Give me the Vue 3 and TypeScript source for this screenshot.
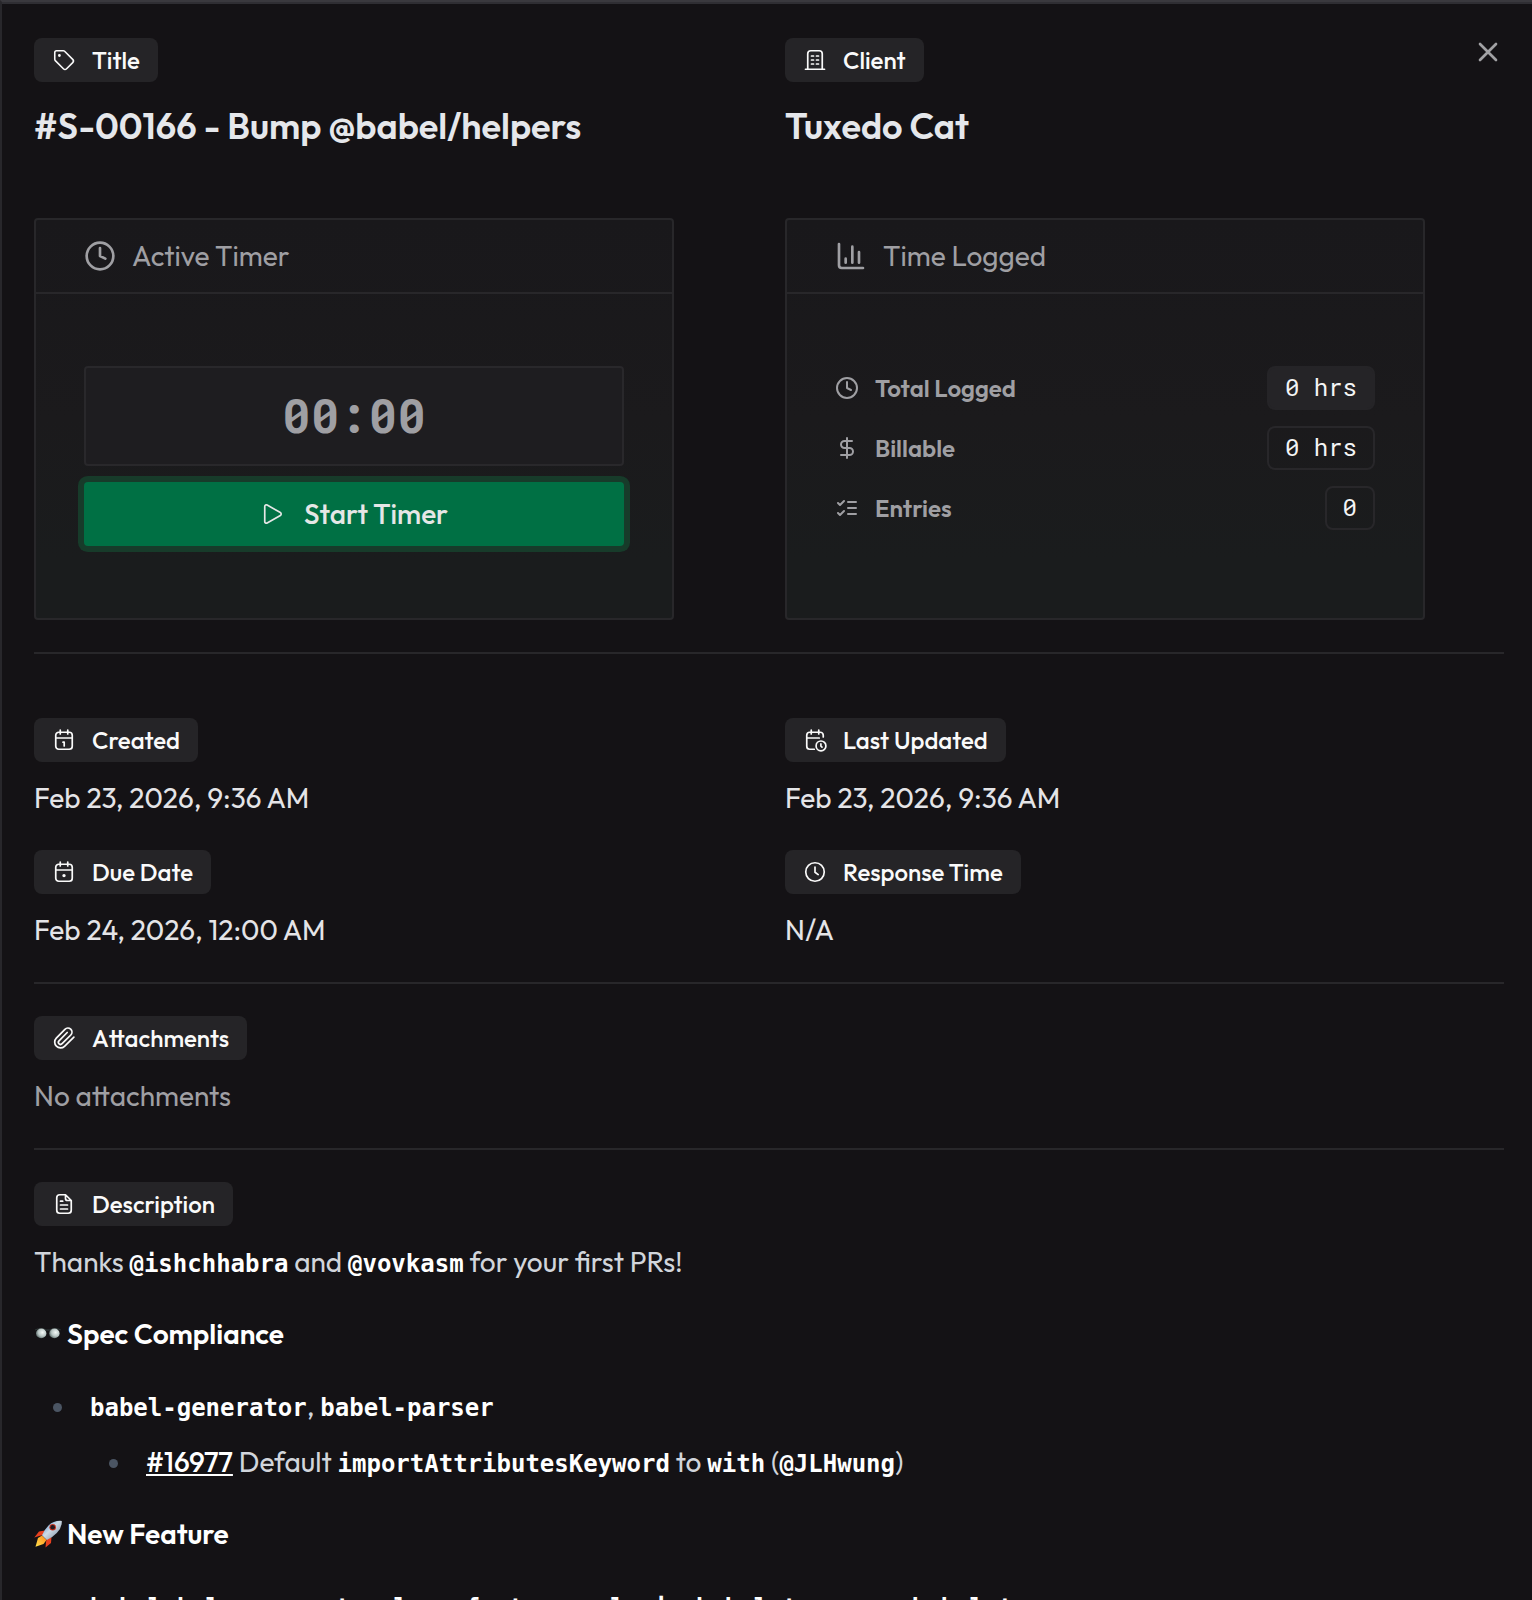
<script setup lang="ts">
type Shape = { d: string; fill?: boolean; transform?: string }

const icons: Record<string, Shape[]> = {
  tag: [
    {
      d: 'M12.586 2.586A2 2 0 0 0 11.172 2H4a2 2 0 0 0-2 2v7.172a2 2 0 0 0 .586 1.414l8.704 8.704a2.426 2.426 0 0 0 3.42 0l6.58-6.58a2.426 2.426 0 0 0 0-3.42z',
      transform: 'translate(.9 .9) scale(.93)',
    },
    { d: 'M7.4 6.1a1.4 1.4 0 1 1 0 2.8a1.4 1.4 0 1 1 0-2.8z', fill: true },
  ],
  building: [
    { d: 'M2.5 21.25h19M4.75 21.25V5.75a3 3 0 0 1 3-3h8.5a3 3 0 0 1 3 3v15.5' },
    { d: 'M8.500 8h2M13.500 8h2M8.500 12h2M13.500 12h2M8.500 16h2M13.500 16h2' },
  ],
  calendarOne: [
    { d: 'M6.75 4.25h10.5a3 3 0 0 1 3 3v11a3 3 0 0 1-3 3H6.75a3 3 0 0 1-3-3v-11a3 3 0 0 1 3-3zM8.25 2v4M15.75 2v4M3.75 10h16.5' },
    { d: 'M11 14.2h1.2v3.8' },
  ],
  calendarDot: [
    { d: 'M6.75 4.25h10.5a3 3 0 0 1 3 3v11a3 3 0 0 1-3 3H6.75a3 3 0 0 1-3-3v-11a3 3 0 0 1 3-3zM8.25 2v4M15.75 2v4M3.75 10h16.5' },
    { d: 'M12 13.9a1.700 1.700 0 1 1 0 3.400a1.700 1.700 0 1 1 0-3.400z', fill: true },
  ],
  calendarClock: [
    { d: 'M20.25 9V7.25a3 3 0 0 0-3-3H6.75a3 3 0 0 0-3 3v11a3 3 0 0 0 3 3h4.5M8.25 2v4M15.75 2v4M3.75 10h12.5' },
    { d: 'M18 13a4.9 4.9 0 1 1 0 9.8a4.9 4.9 0 1 1 0-9.8zM17.9 15.9v2.2l1.1 1' },
  ],
  clock: [{ d: 'M12 2.75a9.25 9.25 0 1 1 0 18.5a9.25 9.25 0 1 1 0-18.5zM12 7v5.2l3.2 2.4' }],
  paperclip: [
    { d: 'm21.9 11.1-9.4 9.2a5.8 5.8 0 0 1-8.2-8.2l8.6-8.8a4.1 4.1 0 0 1 5.9 5.7l-8.7 8.7a2.1 2.1 0 0 1-3.1-2.9l8.2-8.3' },
  ],
  file: [
    { d: 'M13.5 2.75H7.75a3 3 0 0 0-3 3v12.5a3 3 0 0 0 3 3h8.5a3 3 0 0 0 3-3V8.5zM13.5 2.75V6.5a2 2 0 0 0 2 2h3.75M8.5 9.2h2.2M8.5 13h7M8.5 17h7' },
  ],
  play: [{ d: 'M4.75 4.4v15.2a1.6 1.6 0 0 0 2.4 1.4l13.2-7.6a1.6 1.6 0 0 0 0-2.8L7.15 3a1.6 1.6 0 0 0-2.4 1.4z' }],
  clockBold: [{ d: 'M12 2a10 10 0 1 1 0 20a10 10 0 1 1 0-20zM12 6v6l4 2' }],
  chart: [{ d: 'M3 3v16a2 2 0 0 0 2 2h16M18 17V9M13 17V5M8 17v-3' }],
  dollar: [{ d: 'M12 2v20M17 5H9.5a3.5 3.5 0 0 0 0 7h5a3.5 3.5 0 0 1 0 7H6' }],
  checks: [{ d: 'm3 17 2 2 4-4M3 7l2 2 4-4M13 6h8M13 12h8M13 18h8' }],
  close: [{ d: 'M18 6 6 18M6 6l12 12' }],
}

const dates = [
  { icon: 'calendarOne', label: 'Created', value: 'Feb 23, 2026, 9:36 AM' },
  { icon: 'calendarClock', label: 'Last Updated', value: 'Feb 23, 2026, 9:36 AM' },
  { icon: 'calendarDot', label: 'Due Date', value: 'Feb 24, 2026, 12:00 AM' },
  { icon: 'clock', label: 'Response Time', value: 'N/A' },
]

const stats = [
  { icon: 'clockBold', label: 'Total Logged', value: '0 hrs', solid: true },
  { icon: 'dollar', label: 'Billable', value: '0 hrs', solid: false },
  { icon: 'checks', label: 'Entries', value: '0', solid: false },
]
</script>

<template>
  <main class="panel">
    <button class="close" aria-label="Close">
      <svg class="icon lg" viewBox="0 0 24 24"><path v-for="s in icons.close" :key="s.d" :d="s.d" /></svg>
    </button>

    <section class="grid head">
      <div>
        <span class="pill">
          <svg class="icon thin" viewBox="0 0 24 24">
            <path v-for="s in icons.tag" :key="s.d" :d="s.d" :transform="s.transform" :class="{ solid: s.fill }" />
          </svg>
          Title
        </span>
        <h1>#S-00166 - Bump @babel/helpers</h1>
      </div>
      <div>
        <span class="pill">
          <svg class="icon thin" viewBox="0 0 24 24"><path v-for="s in icons.building" :key="s.d" :d="s.d" /></svg>
          Client
        </span>
        <h1>Tuxedo Cat</h1>
      </div>
    </section>

    <section class="grid cards">
      <article class="card">
        <header>
          <svg class="icon lg" viewBox="0 0 24 24"><path v-for="s in icons.clockBold" :key="s.d" :d="s.d" /></svg>
          Active Timer
        </header>
        <div class="body timer">
          <div class="display">00:00</div>
          <button class="start">
            <svg class="icon thin" viewBox="0 0 24 24"><path v-for="s in icons.play" :key="s.d" :d="s.d" /></svg>
            Start Timer
          </button>
        </div>
      </article>
      <article class="card">
        <header>
          <svg class="icon lg" viewBox="0 0 24 24"><path v-for="s in icons.chart" :key="s.d" :d="s.d" /></svg>
          Time Logged
        </header>
        <div class="body">
          <div v-for="row in stats" :key="row.label" class="stat">
            <svg class="icon" viewBox="0 0 24 24"><path v-for="s in icons[row.icon]" :key="s.d" :d="s.d" /></svg>
            <span class="name">{{ row.label }}</span>
            <span class="badge" :class="{ filled: row.solid }">{{ row.value }}</span>
          </div>
        </div>
      </article>
    </section>

    <hr />

    <section class="grid dates">
      <div v-for="item in dates" :key="item.label">
        <span class="pill">
          <svg class="icon thin" viewBox="0 0 24 24">
            <path v-for="s in icons[item.icon]" :key="s.d" :d="s.d" :class="{ solid: s.fill }" />
          </svg>
          {{ item.label }}
        </span>
        <p class="value">{{ item.value }}</p>
      </div>
    </section>

    <hr />

    <section class="block">
      <span class="pill">
        <svg class="icon thin" viewBox="0 0 24 24"><path v-for="s in icons.paperclip" :key="s.d" :d="s.d" /></svg>
        Attachments
      </span>
      <p class="value muted">No attachments</p>
    </section>

    <hr />

    <section class="block">
      <span class="pill">
        <svg class="icon thin" viewBox="0 0 24 24"><path v-for="s in icons.file" :key="s.d" :d="s.d" /></svg>
        Description
      </span>
      <div class="prose">
        <p>Thanks <code>@ishchhabra</code> and <code>@vovkasm</code> for your first PRs!</p>
        <h4>
          <svg class="emoji" viewBox="0 0 28 28" role="img" aria-label="eyeglasses">
            <defs>
              <radialGradient id="lens" cx=".62" cy=".4" r=".65">
                <stop offset="0" stop-color="#f4f8f7" />
                <stop offset=".6" stop-color="#b9c6c4" />
                <stop offset="1" stop-color="#5d6d6c" />
              </radialGradient>
            </defs>
            <path d="M1.2 10Q6 7.4 13 10.2Q14 9.600 15 10.200Q22 7.400 26.600 10" fill="none" stroke="#2d3636" stroke-width="1.2" />
            <ellipse cx="7.2" cy="13.4" rx="5.2" ry="4.9" fill="url(#lens)" />
            <ellipse cx="20.4" cy="13.4" rx="5.2" ry="4.9" fill="url(#lens)" />
          </svg>
          <span>Spec Compliance</span>
        </h4>
        <ul>
          <li>
            <code>babel-generator</code>, <code>babel-parser</code>
            <ul>
              <li>
                <a href="#16977">#16977</a> Default <code>importAttributesKeyword</code> to <code>with</code> (<code>@JLHwung</code>)
              </li>
            </ul>
          </li>
        </ul>
        <h4>
          <svg class="emoji" viewBox="0 0 28 28" role="img" aria-label="rocket">
            <defs>
              <linearGradient id="hull" x1="0" y1="0" x2="1" y2="1">
                <stop offset="0" stop-color="#3f86cc" />
                <stop offset=".45" stop-color="#cfdbe6" />
                <stop offset="1" stop-color="#6f8196" />
              </linearGradient>
              <linearGradient id="flame" x1="1" y1="0" x2="0" y2="1">
                <stop offset="0" stop-color="#ff8a1c" />
                <stop offset="1" stop-color="#ffe14a" />
              </linearGradient>
            </defs>
            <path d="M11 10.5L5 11.5L.3 17.5L6 15.800L9 15z" fill="#e8401f" />
            <path d="M17.5 17L17 23L11.5 27.5L12 22L12.8 19z" fill="#e8401f" />
            <path d="M8 15.5L4 18L1.5 26.7L9.5 24L12.5 20z" fill="url(#flame)" />
            <path d="M27.8.9Q20 .3 14.5 5.5Q10.5 9.5 8 15.2L12.8 20Q19 17 22.800 13Q28.200 7.500 27.800.9z" fill="url(#hull)" />
            <circle cx="18.7" cy="7.2" r="3.3" fill="#c8321f" />
            <circle cx="18.7" cy="7.2" r="2.3" fill="#241a20" />
          </svg>
          <span>New Feature</span>
        </h4>
        <ul>
          <li>
            <code>babel-helper-create-class-features-plugin</code>, <code>babel-traverse</code>, <code>babel-types</code>
          </li>
        </ul>
      </div>
    </section>
  </main>
</template>

<style>
body {
  background: #141215;
  overflow: hidden;
}
</style>

<style scoped>
.panel {
  position: relative;
  box-sizing: border-box;
  width: 1532px;
  height: 1600px;
  overflow: hidden;
  padding: 36px 28px 0 32px;
  border-left: 2px solid #28272b;
  border-top: 2px solid #3a393e;
  background: #141215;
  box-shadow: inset 0 2px #2f2e33;
  color: #e4e4e7;
  font-family: Outfit, Lato, sans-serif;
  font-size: 28px;
  font-weight: 400;
  line-height: 40px;
}

.panel * {
  box-sizing: border-box;
}

button {
  border: 0;
  padding: 0;
  font: inherit;
}

.close {
  position: absolute;
  top: 34px;
  right: 28px;
  width: 32px;
  height: 32px;
  background: none;
  color: #a1a1a4;
}

.icon {
  display: block;
  flex: none;
  width: 24px;
  height: 24px;
  fill: none;
  stroke: currentColor;
  stroke-width: 2;
  stroke-linecap: round;
  stroke-linejoin: round;
}

.icon.thin {
  stroke-width: 1.7;
}

.icon.lg {
  width: 32px;
  height: 32px;
}

.solid {
  fill: currentColor;
  stroke: none;
}

.grid {
  display: grid;
  grid-template-columns: 719px 719px;
  column-gap: 32px;
}

.pill {
  display: flex;
  align-items: center;
  gap: 16px;
  width: fit-content;
  height: 44px;
  padding: 0 18px;
  border-radius: 8px;
  background: #252427;
  color: #fafafa;
  font-size: 24px;
  font-weight: 500;
}

h1 {
  margin: 22px 0 70px;
  color: #e5e7eb;
  font-size: 36px;
  font-weight: 600;
  line-height: 44px;
}

.card {
  width: 640px;
  height: 402px;
  border: 2px solid #28272a;
  border-radius: 4px;
  background: linear-gradient(#19181b, #1b1a1c 50%, #1a1c1d 85%);
  color: #9f9fa3;
}

.card header {
  display: flex;
  align-items: center;
  gap: 16px;
  height: 74px;
  padding: 0 46px 0 48px;
  border-bottom: 2px solid #28272a;
}

.body {
  display: flex;
  flex-direction: column;
  gap: 16px;
  padding: 72px 48px;
}

.display {
  height: 100px;
  border: 2px solid #29282b;
  border-radius: 4px;
  background: #1e1d20;
  font: 700 48px/94px 'Roboto Mono', 'DejaVu Sans Mono', monospace;
  text-align: center;
}

.start {
  display: flex;
  align-items: center;
  justify-content: center;
  gap: 20px;
  height: 64px;
  border-radius: 4px;
  background: #007044;
  box-shadow: 0 0 0 6px #173b2a;
  color: #e5e7e6;
  font-weight: 500;
}

.stat {
  display: flex;
  align-items: center;
  gap: 16px;
  height: 44px;
}

.name {
  flex: 1;
  font-size: 24px;
  font-weight: 600;
}

.badge {
  height: 44px;
  padding: 0 16px;
  border: 2px solid #28272a;
  border-radius: 8px;
  color: #f4f4f5;
  font: 400 24px/38px 'Roboto Mono', 'DejaVu Sans Mono', monospace;
}

.badge.filled {
  border-color: #252427;
  background: #252427;
}

hr {
  height: 2px;
  margin: 32px 0;
  border: 0;
  background: #28272a;
}

.dates {
  row-gap: 32px;
  margin-top: 64px;
}

.value {
  margin: 16px 0 0;
}

.muted {
  color: #9f9fa3;
}

.prose {
  margin-top: 16px;
  color: #d1d5db;
}

.prose p {
  margin: 0 0 32px;
}

.prose h4 {
  display: flex;
  align-items: center;
  gap: 5px;
  margin: 0 0 32px;
  color: #fff;
  font-size: 28px;
  font-weight: 600;
}

.emoji {
  width: 28px;
  height: 28px;
}

.prose ul {
  margin: 0 0 32px;
  padding-left: 44px;
  list-style: disc;
}

.prose li {
  padding-left: 12px;
  white-space: nowrap;
}

.prose li::marker {
  color: #4b5563;
}

.prose li > ul {
  margin: 16px 0 0;
}

code {
  color: #fff;
  font: 700 24px/1 'DejaVu Sans Mono', monospace;
}

a {
  color: #fff;
  font-weight: 500;
  text-decoration: underline;
}
</style>
